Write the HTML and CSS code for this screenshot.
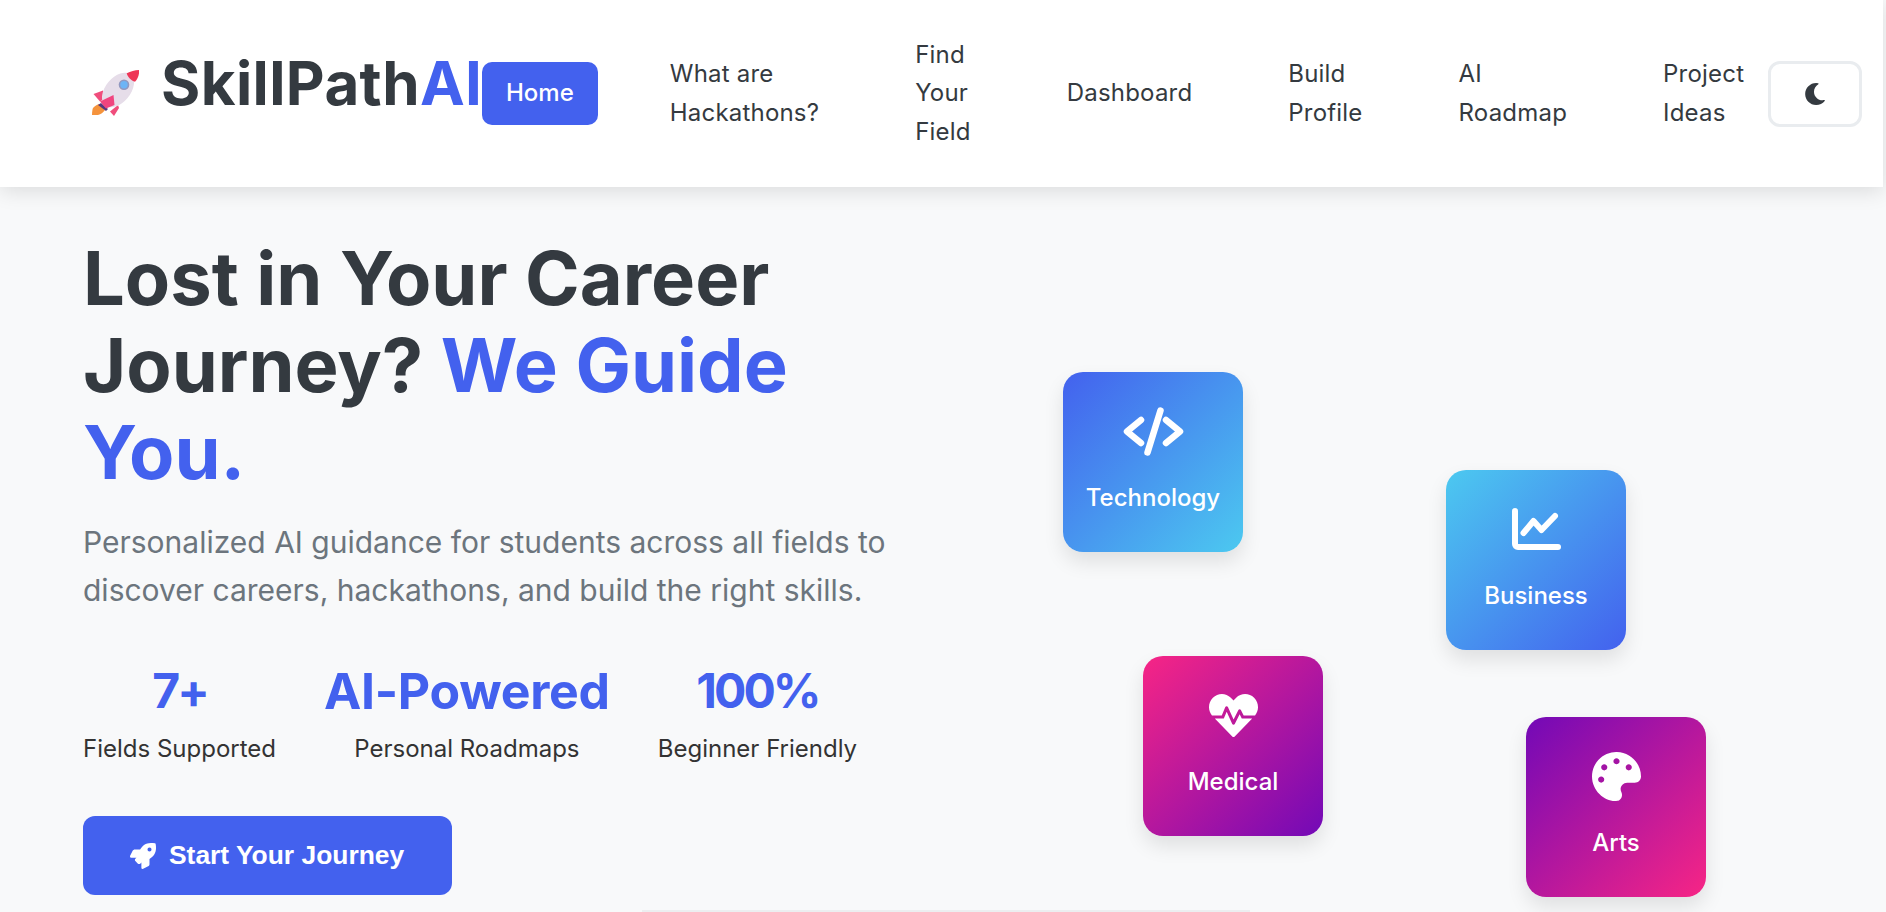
FILE: index.html
```html
<!DOCTYPE html>
<html lang="en">
<head>
    <meta charset="UTF-8" />
    <meta name="viewport" content="width=device-width, initial-scale=1.0" />
    <title>SkillPathAI</title>
    <link rel="stylesheet" href="styles.css">
</head>
<body>
    <nav class="navbar">
        <a class="logo" href="#">
            <svg class="logo-rocket" viewBox="22 19 47 47">
                <path d="M22 65c0-3 .5-6 1-7 1.500-2 3.500-3 6-4l6 6c-2 2.500-4 4.500-7 5z" fill="#f5933c"/>
                <path d="M23.500 44l9.500-3.500 2 8-5 3z" fill="#f04d7c"/>
                <path d="M40 61.500l8-6.500 1 3-5 8z" fill="#f04d7c"/>
                <path d="M28 55l3-2 7 6-2 2z" fill="#54387f"/>
                <ellipse cx="48" cy="40" rx="20" ry="12.500" transform="rotate(-50 48 40)" fill="#e6dde9"/>
                <path d="M56.700 23.300c4-2 8-3.300 12.300-3.300.5 4-1 8.500-4 11.700-4-1-7.300-4.500-8.300-8.400z" fill="#ee3657"/>
                <path d="M30 51.500l13.500-6.500 1 10-8.500 3.500z" fill="#f0457f"/>
                <circle cx="54" cy="34.700" r="5.300" fill="#9298c0"/>
                <circle cx="54" cy="34.700" r="3.700" fill="#6db4f6"/>
            </svg>
            <span class="logo-text">SkillPath<span class="accent">AI</span></span>
        </a>
        <ul class="nav-links">
            <li><a class="active" href="#">Home</a></li>
            <li><a href="#">What are<br>Hackathons?</a></li>
            <li><a href="#">Find<br>Your<br>Field</a></li>
            <li><a href="#">Dashboard</a></li>
            <li><a href="#">Build<br>Profile</a></li>
            <li><a href="#">AI<br>Roadmap</a></li>
            <li><a href="#">Project<br>Ideas</a></li>
        </ul>
        <button class="theme-toggle" aria-label="Toggle theme">
            <svg viewBox="0 0 512 512"><path d="M283.211 512c78.962 0 151.079-35.925 198.857-94.792 7.068-8.708-.639-21.43-11.562-19.35-124.203 23.654-238.262-71.576-238.262-196.954 0-72.222 38.662-138.635 101.498-174.394 9.686-5.512 7.25-20.197-3.756-22.23A258.156 258.156 0 0 0 283.211 0c-141.309 0-256 114.511-256 256 0 141.309 114.511 256 256 256z"/></svg>
        </button>
    </nav>

    <main class="hero">
        <section class="hero-content">
            <h1>Lost in Your Career<br>Journey? <span class="accent">We Guide<br>You.</span></h1>
            <p class="hero-text">Personalized AI guidance for students across all fields to<br>discover careers, hackathons, and build the right skills.</p>
            <div class="stats">
                <div class="stat">
                    <div class="stat-value number">7+</div>
                    <div class="stat-label">Fields Supported</div>
                </div>
                <div class="stat">
                    <div class="stat-value">AI-Powered</div>
                    <div class="stat-label">Personal Roadmaps</div>
                </div>
                <div class="stat">
                    <div class="stat-value number">100%</div>
                    <div class="stat-label">Beginner Friendly</div>
                </div>
            </div>
            <button class="cta">
                <svg viewBox="0 0 512 512"><path d="M505.12019,19.09375c-1.18945-5.53125-6.65819-11-12.207-12.1875C460.716,0,435.507,0,410.40747,0,307.17523,0,245.26909,55.20312,199.05238,128H94.83772c-16.34763.01562-35.55658,11.875-42.88664,26.48438L2.51562,253.29688A28.4,28.4,0,0,0,0,264a24.00867,24.00867,0,0,0,24.00582,24H127.81618l-22.47457,22.46875c-11.36521,11.36133-12.99607,32.25781,0,45.25L156.24582,406.625c11.15623,11.1875,32.15619,13.15625,45.27726,0l22.47457-22.46875V488a24.00867,24.00867,0,0,0,24.00581,24,28.55934,28.55934,0,0,0,10.707-2.51562l98.72834-49.39063c14.62888-7.29687,26.50776-26.5,26.50776-42.85937V312.79688c72.59753-46.3125,128.03493-108.40626,128.03493-211.09376C512.07526,76.5,512.07526,51.29688,505.12019,19.09375ZM384.04033,168A40,40,0,1,1,424.05,128,40.02322,40.02322,0,0,1,384.04033,168Z"/></svg>
                Start Your Journey
            </button>
        </section>

        <section class="hero-visual">
            <div class="field-card tech">
                <svg class="icon-code" viewBox="0 0 61 49"><path d="M18 13L4 24.500 18 36M43 13l14 11.500L43 36M37.500 3.500l-13 42"/></svg>
                <span>Technology</span>
            </div>
            <div class="field-card business">
                <svg class="icon-chart" viewBox="0 0 49 43"><path d="M3 3v33a3 3 0 0 0 3 3h40M11.500 25L21.500 13l8 9L43 8"/></svg>
                <span>Business</span>
            </div>
            <div class="field-card medical">
                <svg class="icon-solid" viewBox="0 0 512 512"><path d="M320.2 243.8l-49.7 99.4c-6 12.1-23.4 11.7-28.9-.6l-56.9-126.3-30 71.7H60.6l182.5 186.5c7.1 7.3 18.6 7.3 25.7 0L451.4 288H342.3l-22.1-44.2zM473.7 73.9l-2.4-2.5c-51.5-52.6-135.8-52.6-187.4 0L256 100l-27.9-28.5c-51.5-52.7-135.9-52.7-187.4 0l-2.4 2.4C-10.4 123.7-12.5 203 31 256h102.4l35.9-86.2c5.4-12.9 23.6-13.2 29.4-.4l58.2 129.3 49-97.9c5.9-11.8 22.7-11.8 28.6 0l27.6 55.2H481c43.5-53 41.4-132.3-7.3-182.1z"/></svg>
                <span>Medical</span>
            </div>
            <div class="field-card arts">
                <svg class="icon-solid" viewBox="0 0 512 512"><path d="M204.3 5C104.9 24.4 24.8 104.3 5.2 203.4c-37 187 131.700 326.400 258.800 306.700 41.200-6.400 61.400-54.600 42.500-91.700-23.100-45.400 9.900-98.400 60.900-98.400h79.700c35.800 0 64.800-29.600 64.900-65.300C511.500 97.100 368.100-26.900 204.300 5zM96 320c-17.700 0-32-14.300-32-32s14.300-32 32-32 32 14.300 32 32-14.300 32-32 32zm32-128c-17.700 0-32-14.300-32-32s14.300-32 32-32 32 14.300 32 32-14.300 32-32 32zm128-64c-17.700 0-32-14.300-32-32s14.300-32 32-32 32 14.300 32 32-14.300 32-32 32zm128 64c-17.700 0-32-14.300-32-32s14.300-32 32-32 32 14.300 32 32-14.300 32-32 32z"/></svg>
                <span>Arts</span>
            </div>
        </section>
        <div class="next-section"></div>
    </main>
</body>
</html>
```

FILE: styles.css
```css
* {
    box-sizing: border-box;
}
html, body {
    height: 100%;
    overflow: hidden;
}
body {
    margin: 0;
    background: #f8f9fa;
    color: #343a40;
    font-family: 'Inter', sans-serif;
}
a {
    text-decoration: none;
    color: inherit;
}
.accent {
    color: #4361ee;
}

/* Navbar */
.navbar {
    position: relative;
    z-index: 2;
    display: flex;
    align-items: center;
    width: 1883px;
    height: 187px;
    padding: 0 21px 0 92px;
    background: #fff;
    box-shadow: 0 4px 20px rgba(0, 0, 0, 0.12);
}
.logo {
    display: flex;
    align-items: center;
    gap: 22px;
    width: 390px;
    font-size: 60px;
    font-weight: 700;
    letter-spacing: 0.4px;
    white-space: nowrap;
}
.logo-text {
    margin-bottom: 22px;
}
.logo-rocket {
    width: 47px;
    height: 47px;
    margin-top: -2px;
    flex-shrink: 0;
}
.nav-links {
    display: flex;
    align-items: center;
    gap: 48px;
    margin: 0;
    padding: 0;
    list-style: none;
    flex: 1;
}
.nav-links a {
    display: block;
    padding: 12px 24px;
    border-radius: 10px;
    font-size: 24px;
    line-height: 38.4px;
    letter-spacing: 0.2px;
    white-space: nowrap;
}
.nav-links a.active {
    background: #4361ee;
    color: #fff;
    font-weight: 500;
    letter-spacing: 0;
}
.theme-toggle {
    display: flex;
    align-items: center;
    justify-content: center;
    width: 95px;
    height: 66px;
    background: #fff;
    border: 3px solid #e9ecef;
    border-radius: 12px;
}
.theme-toggle svg {
    width: 22px;
    height: 22px;
    fill: #343a40;
}

/* Hero */
.hero {
    position: relative;
    height: 725px;
}
.hero-content {
    padding: 48px 0 0 83px;
}
h1 {
    margin: 0;
    font-size: 74px;
    font-weight: 700;
    line-height: 87px;
    color: #343a40;
}
.hero-text {
    margin: 22px 0 0;
    font-size: 30px;
    line-height: 48px;
    color: #6c757d;
}
.stats {
    display: flex;
    gap: 48px;
    margin-top: 43px;
}
.stat {
    text-align: center;
}
.stat-value {
    font-size: 50px;
    font-weight: 700;
    line-height: 68px;
    letter-spacing: -0.3px;
    color: #4361ee;
}
.stat-value.number {
    font-size: 48px;
    letter-spacing: -3px;
}
.stat-label {
    margin-top: 5px;
    font-size: 24px;
    line-height: 38px;
    color: #333;
}
.cta {
    display: flex;
    align-items: center;
    gap: 13px;
    width: 369px;
    height: 79px;
    margin-top: 48px;
    padding: 0 0 0 47px;
    border: none;
    border-radius: 12px;
    background: #4361ee;
    color: #fff;
    font-family: 'Liberation Sans', Arial, sans-serif;
    font-size: 26.4px;
    font-weight: 700;
}
.cta svg {
    width: 26px;
    height: 26px;
    fill: #fff;
}

/* Floating field cards */
.hero-visual {
    position: absolute;
    top: 0;
    left: 0;
    width: 100%;
    height: 100%;
}
.field-card {
    position: absolute;
    display: flex;
    flex-direction: column;
    align-items: center;
    width: 180px;
    height: 180px;
    padding-top: 35px;
    border-radius: 20px;
    color: #fff;
    font-size: 24px;
    font-weight: 500;
    box-shadow: 0 10px 20px rgba(0, 0, 0, 0.1);
}
.field-card span {
    position: absolute;
    top: 109px;
    line-height: 34px;
}
.field-card svg {
    height: 49px;
}
.tech {
    left: 1063px;
    top: 185px;
    background: linear-gradient(135deg, #4361ee, #4cc9f0);
}
.business {
    left: 1446px;
    top: 283px;
    background: linear-gradient(135deg, #4cc9f0, #4361ee);
}
.medical {
    left: 1143px;
    top: 469px;
    background: linear-gradient(135deg, #f72585, #7209b7);
}
.arts {
    left: 1526px;
    top: 530px;
    background: linear-gradient(135deg, #7209b7, #f72585);
}
.icon-code {
    width: 61px;
    fill: none;
    stroke: #fff;
    stroke-width: 6.5;
    stroke-linecap: round;
    stroke-linejoin: round;
}
.icon-chart {
    width: 49px;
    fill: none;
    stroke: #fff;
    stroke-width: 6;
    stroke-linecap: round;
    stroke-linejoin: round;
}
.icon-solid {
    width: 49px;
    fill: #fff;
}
.next-section {
    position: absolute;
    left: 642px;
    top: 723px;
    width: 608px;
    height: 40px;
    background: #eceef0;
}
```
